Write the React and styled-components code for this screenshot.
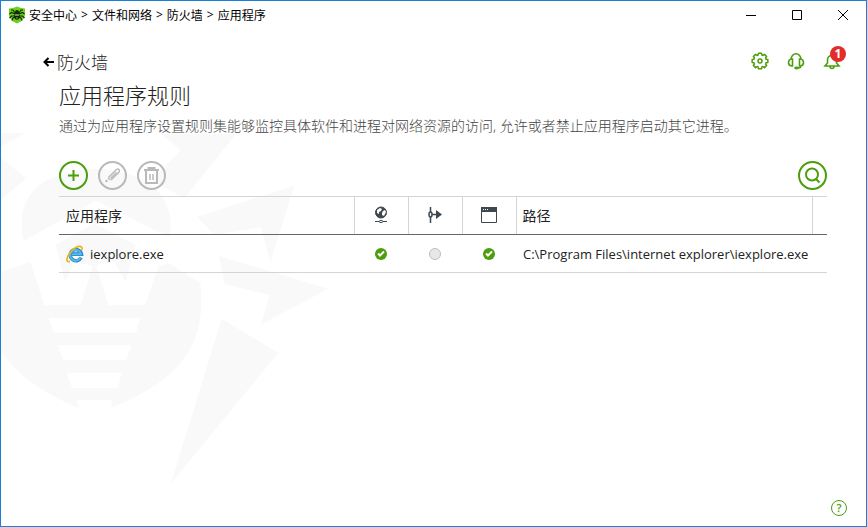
import React, { useState } from 'react'
import styled, { createGlobalStyle } from 'styled-components'

const rows = [
    {
        name: 'iexplore.exe',
        network: true,
        launch: false,
        windows: true,
        path: 'C:\\Program Files\\internet explorer\\iexplore.exe',
    },
]

const crumbs = ['安全中心', '文件和网络', '防火墙', '应用程序']

// eight teeth around (9, 9)
function gearPath() {
    const points = []
    for (let i = 0; i < 8; i++) {
        [[-17, 6.3], [-11, 8], [11, 8], [17, 6.3]].forEach(([offset, r]) => {
            const angle = ((i * 45 + offset) * Math.PI) / 180
            points.push(`${(9 + r * Math.cos(angle)).toFixed(2)} ${(9 + r * Math.sin(angle)).toFixed(2)}`)
        })
    }
    return `M${points.join('L')}z`
}

function Logo() {
    return (
        <svg width="18" height="18" viewBox="0 0 18 18" aria-hidden="true">
            <path d="M1 2.500C4 2.500 6 1.500 9 .5c3 1 5 2 8 2V8c0 5-4 8-8 9.500C5 16 1 13 1 8z" fill="#6bd11a" />
            <path
                d="M7 7L5 4 3 4M7 8L3.500 6.500 1.500 8M7 10l-3.500 0-2 2M7 11l-2 1-1 2.500M11 7l2-3 2 0M11 8l3.500-1.500 2 1.500M11 10l3.500 0 2 2M11 11l2 1 1 2.500"
                stroke="#14280a"
                strokeWidth="1.100"
                fill="none"
            />
            <ellipse cx="9" cy="10" rx="2.800" ry="3.800" fill="#14280a" />
            <circle cx="9" cy="6" r="2" fill="#14280a" />
            <path d="M7 8l1 2 1-2 1 2 1-2M8 12h2" stroke="#a6e36d" strokeWidth="0.700" fill="none" />
        </svg>
    )
}

function Spider() {
    return (
        <Watermark viewBox="0 0 1020 1200" aria-hidden="true">
            <path d="M0 70H75L0 109z" />
            <path d="M0 143L75 205 0 270z" />
            <path d="M68 392C45 290 90 215 190 192q90-30 190-1C470 215 525 290 505 382L285 272z" />
            <path d="M480 72H705L550 265 453 210 540 120z" />
            <path d="M588 320L880 227 808 455 780 352 640 374z" />
            <path d="M654 438L982 536 779 644 806 555 671 523z" />
            <path d="M662 626L832 729 510 1120z" />
            <path d="M0 486L88 456 130 585H432L473 468 504 460 598 520C615 690 560 800 330 894L334 871H227L232 894C120 845 50 795 0 725z" />
            <path d="M164 404L280 340 403 404 374 517 340 455 285 465 322 585H240L275 468 220 455 192 517z" />
            <path
                d="M143 624H418L405 668H158zM170 706H391L376 750H186zM197 788H363L350 834H213z"
                fill="#fff"
            />
        </Watermark>
    )
}

function IeIcon() {
    return (
        <svg width="18" height="18" viewBox="0 0 18 18" aria-hidden="true">
            <path d="M15 12.500a5.600 5.600 0 1 1 .4-3.400H6" fill="none" stroke="#2a86c4" strokeWidth="3.600" />
            <path d="M14.500 12.500a5.400 5.400 0 1 1 .4-3.200H6" fill="none" stroke="#55b9ec" strokeWidth="2" />
            <path d="M4 16.500C-1 18 .5 11 6 5.500S17 0 16 5" fill="none" stroke="#e8b41e" strokeWidth="1.700" />
        </svg>
    )
}

function Check() {
    return (
        <svg width="12" height="12" viewBox="0 0 12 12" role="img" aria-label="允许">
            <circle cx="6" cy="6" r="6" fill="#4c9e0c" />
            <path d="M3 5.500l2 2 4-4" fill="none" stroke="#fff" strokeWidth="2" />
        </svg>
    )
}

function Empty() {
    return (
        <svg width="12" height="12" viewBox="0 0 12 12" role="img" aria-label="未设置">
            <circle cx="6" cy="6" r="5.500" fill="#e8e8e4" stroke="#bdbdbd" />
        </svg>
    )
}

function App() {
    const [items] = useState(rows)
    return (
        <>
            <GlobalStyle />
            <Window>
                <Spider />
                <TitleBar>
                    <Logo />
                    <Crumbs>
                        {crumbs.map((crumb, i) => (
                            <React.Fragment key={crumb}>
                                {i > 0 && <span>&gt;</span>}
                                {crumb}
                            </React.Fragment>
                        ))}
                    </Crumbs>
                    <WindowButton aria-label="最小化">
                        <svg width="11" height="11" stroke="#000"><path d="M0 5.500h10" /></svg>
                    </WindowButton>
                    <WindowButton aria-label="最大化">
                        <svg width="11" height="11" stroke="#000" fill="none"><path d="M.5.5h9v9h-9z" /></svg>
                    </WindowButton>
                    <WindowButton aria-label="关闭">
                        <svg width="11" height="11" stroke="#000"><path d="M0 0l10 10M10 0L0 10" /></svg>
                    </WindowButton>
                </TitleBar>
                <Header>
                    <BackLink href="#firewall">
                        <svg width="11" height="14" viewBox="0 0 11 14" fill="none" stroke="#000" strokeWidth="2" aria-hidden="true">
                            <path d="M5.500 4L1.500 8l4 4M2 8h9" />
                        </svg>
                        防火墙
                    </BackLink>
                    <Tools>
                        <ToolButton aria-label="设置">
                            <svg width="18" height="18" viewBox="0 0 18 18" fill="none" stroke="currentColor" strokeWidth="1.500">
                                <path d={gearPath()} strokeLinejoin="round" />
                                <circle cx="9" cy="9" r="2" />
                            </svg>
                        </ToolButton>
                        <ToolButton aria-label="支持">
                            <svg width="18" height="18" viewBox="0 0 18 18" fill="none" stroke="currentColor" strokeWidth="1.600">
                                <path d="M4 7.500a5 5.700 0 0 1 10 0M5.500 7v7H4.500Q1.500 13.500 1.500 10.500T4.500 7zM12.500 7v7h1q3-.5 3-3.500T13.500 7zM14 14q0 2-3 2" />
                                <ellipse cx="9.500" cy="16" rx="2.300" ry="1.400" fill="currentColor" stroke="none" />
                            </svg>
                        </ToolButton>
                        <ToolButton aria-label="通知">
                            <svg width="18" height="18" viewBox="0 0 18 18" fill="none" stroke="currentColor" strokeWidth="1.600">
                                <path d="M2 14h14l-2.500-3V7.500Q13 3.500 9 3.500T4.500 7.500V11zM7 14.500q0 2 2 2t2-2" />
                            </svg>
                            <Badge>1</Badge>
                        </ToolButton>
                    </Tools>
                </Header>
                <Main>
                    <Title>应用程序规则</Title>
                    <Description>
                        通过为应用程序设置规则集能够监控具体软件和进程对网络资源的访问, 允许或者禁止应用程序启动其它进程。
                    </Description>
                    <Toolbar>
                        <RoundButton aria-label="添加">
                            <svg width="25" height="25" viewBox="0 0 25 25" fill="none" stroke="currentColor" strokeWidth="2">
                                <path d="M7 12.500h11M12.500 7v11" />
                            </svg>
                        </RoundButton>
                        <RoundButton disabled aria-label="编辑">
                            <svg width="25" height="25" viewBox="0 0 25 25" fill="none" stroke="currentColor" strokeWidth="1.500">
                                <path d="M8.500 14.500L16.500 6.500q1.500-1 2.500 0t0 2.500L11 17" />
                                <path d="M10.500 15.500l6-6" />
                                <circle cx="6.500" cy="18" r="1.200" fill="currentColor" stroke="none" />
                                <path d="M8 15l2 2" />
                            </svg>
                        </RoundButton>
                        <RoundButton disabled aria-label="删除">
                            <svg width="25" height="25" viewBox="0 0 25 25" fill="none" stroke="currentColor" strokeWidth="2">
                                <path d="M5 7h15M9.500 7V5h6v2M7 8v12h11V8" />
                                <path d="M11 11v6M14 11v6" strokeWidth="1.500" />
                            </svg>
                        </RoundButton>
                        <Spacer />
                        <RoundButton aria-label="搜索">
                            <svg width="25" height="25" viewBox="0 0 25 25" fill="none" stroke="currentColor" strokeWidth="2">
                                <circle cx="12" cy="11.500" r="6" />
                                <path d="M15.500 15.500L19.500 19.500" />
                            </svg>
                        </RoundButton>
                    </Toolbar>
                    <Table>
                        <colgroup>
                            <col />
                            <Col $width={54} />
                            <Col $width={54} />
                            <Col $width={54} />
                            <Col $width={296} />
                            <Col $width={15} />
                        </colgroup>
                        <thead>
                            <tr>
                                <Th>应用程序</Th>
                                <Th aria-label="网络">
                                    <svg width="16" height="18" viewBox="0 0 16 18" fill="none" stroke="#3f474f">
                                        <circle cx="8" cy="6.500" r="5.500" fill="#3f474f" />
                                        <path d="M4 4l3-2 2 1-1 2-2 1 0 2-2-1zM10 5l2-1 1 2-2 4-2-1 0-2z" fill="#fff" stroke="none" />
                                        <path d="M2 15.500h12" />
                                        <ellipse cx="8" cy="15.500" rx="2" ry="1" fill="#fff" />
                                    </svg>
                                </Th>
                                <Th aria-label="启动">
                                    <svg width="16" height="18" viewBox="0 0 16 18" fill="none" stroke="#3f474f" strokeWidth="1.500">
                                        <path d="M3.500 1v5M3.500 11v6M5 8.500h6" />
                                        <ellipse cx="3.500" cy="8.500" rx="1.500" ry="2.500" />
                                        <path d="M9 4l6 4.500L9 13z" fill="#3f474f" stroke="none" />
                                    </svg>
                                </Th>
                                <Th aria-label="窗口">
                                    <svg width="16" height="18" viewBox="0 0 16 18" fill="none" stroke="#3f474f">
                                        <path d="M.5 1.500h15v15H.5z" />
                                        <path d="M0 1h16v5H0z" fill="#3f474f" stroke="none" />
                                        <path d="M2 3.500h1M4 3.500h1M6 3.500h1" stroke="#fff" />
                                    </svg>
                                </Th>
                                <Th>路径</Th>
                                <Th aria-label="更多" />
                            </tr>
                        </thead>
                        <tbody>
                            {items.map(row => (
                                <tr key={row.name}>
                                    <Td>
                                        <AppName>
                                            <IeIcon />
                                            {row.name}
                                        </AppName>
                                    </Td>
                                    <Td>{row.network ? <Check /> : <Empty />}</Td>
                                    <Td>{row.launch ? <Check /> : <Empty />}</Td>
                                    <Td>{row.windows ? <Check /> : <Empty />}</Td>
                                    <Td colSpan={2}>{row.path}</Td>
                                </tr>
                            ))}
                        </tbody>
                    </Table>
                </Main>
                <Footer>
                    <HelpButton aria-label="帮助">?</HelpButton>
                </Footer>
            </Window>
        </>
    )
}

export default App

const GlobalStyle = createGlobalStyle`
    * {
        box-sizing: border-box;
    }
    body {
        margin: 0;
        font-family: 'Open Sans', 'Noto Sans CJK SC', sans-serif;
        font-size: 13px;
        color: #222;
    }
    button {
        padding: 0;
        border: 0;
        background: none;
        font: inherit;
        cursor: pointer;
    }
    svg {
        display: block;
    }
`
const Window = styled.div`
    position: relative;
    display: flex;
    flex-direction: column;
    min-height: 100vh;
    border: 1px solid #1a80d6;
    background-color: white;
    overflow: hidden;
`
const Watermark = styled.svg`
    position: absolute;
    top: 109px;
    left: 0;
    width: 340px;
    fill: #f9f9f9;
`
const TitleBar = styled.div`
    position: relative;
    display: flex;
    align-items: center;
    height: 28px;
    padding-left: 7px;
`
const Crumbs = styled.div`
    display: flex;
    flex: 1;
    gap: 4px;
    margin-left: 3px;
    font-size: 12px;
    color: #000;
`
const WindowButton = styled.button`
    display: grid;
    place-items: center;
    width: 46px;
    height: 28px;
`
const Header = styled.header`
    position: relative;
    display: flex;
    justify-content: space-between;
    align-items: center;
    height: 36px;
    margin-top: 14px;
    padding: 0 25px 0 42px;
`
const BackLink = styled.a`
    display: flex;
    align-items: center;
    gap: 3px;
    font-size: 17px;
    font-weight: 300;
    color: #222;
    text-decoration: none;
`
const Tools = styled.div`
    display: flex;
    gap: 18px;
`
const ToolButton = styled.button`
    position: relative;
    color: #4c9e0c;
`
const Badge = styled.span`
    position: absolute;
    top: -6px;
    right: -5px;
    width: 16px;
    height: 16px;
    border-radius: 50%;
    background-color: #e52a2a;
    color: white;
    font-size: 12px;
    font-weight: 700;
    line-height: 16px;
    text-align: center;
`
const Main = styled.main`
    position: relative;
    flex: 1;
    padding: 0 39px 0 58px;
`
const Title = styled.h1`
    margin: 0;
    font-size: 22px;
    font-weight: 300;
    line-height: 32px;
`
const Description = styled.p`
    margin: 4px 0 0;
    font-size: 14px;
    font-weight: 300;
    line-height: 22px;
    color: #444;
`
const Toolbar = styled.div`
    display: flex;
    gap: 10px;
    margin: 24px 0 6px;
`
const Spacer = styled.div`
    flex: 1;
`
const RoundButton = styled.button`
    display: grid;
    place-items: center;
    width: 29px;
    height: 29px;
    border: 2px solid currentColor;
    border-radius: 50%;
    color: #4c9e0c;

    &:disabled {
        color: #b9b9b9;
        cursor: default;
    }
`
const Table = styled.table`
    width: 100%;
    border-collapse: collapse;
    table-layout: fixed;
`
const Col = styled.col`
    width: ${({ $width }) => $width}px;
`
const Th = styled.th`
    height: 38px;
    padding: 0 6px 2px 7px;
    border-top: 1px solid #d5d5d5;
    border-bottom: 1px solid #666;
    font-size: 14px;
    font-weight: 400;
    text-align: left;

    & + & {
        padding-left: 6px;
        border-left: 1px solid #d5d5d5;
    }
    svg {
        margin: 0 auto;
    }
`
const Td = styled.td`
    height: 38px;
    padding: 0 7px;
    border-bottom: 1px solid #d5d5d5;
    white-space: nowrap;

    > svg {
        margin: 0 auto;
    }
`
const AppName = styled.div`
    display: flex;
    align-items: center;
    gap: 6px;
`
const Footer = styled.footer`
    position: relative;
    display: flex;
    justify-content: flex-end;
    padding: 0 19px 10px;
`
const HelpButton = styled.button`
    width: 16px;
    height: 16px;
    border: 1px solid #4c9e0c;
    border-radius: 50%;
    color: #4c9e0c;
    font-size: 11px;
    font-weight: 600;
    line-height: 14px;
`
